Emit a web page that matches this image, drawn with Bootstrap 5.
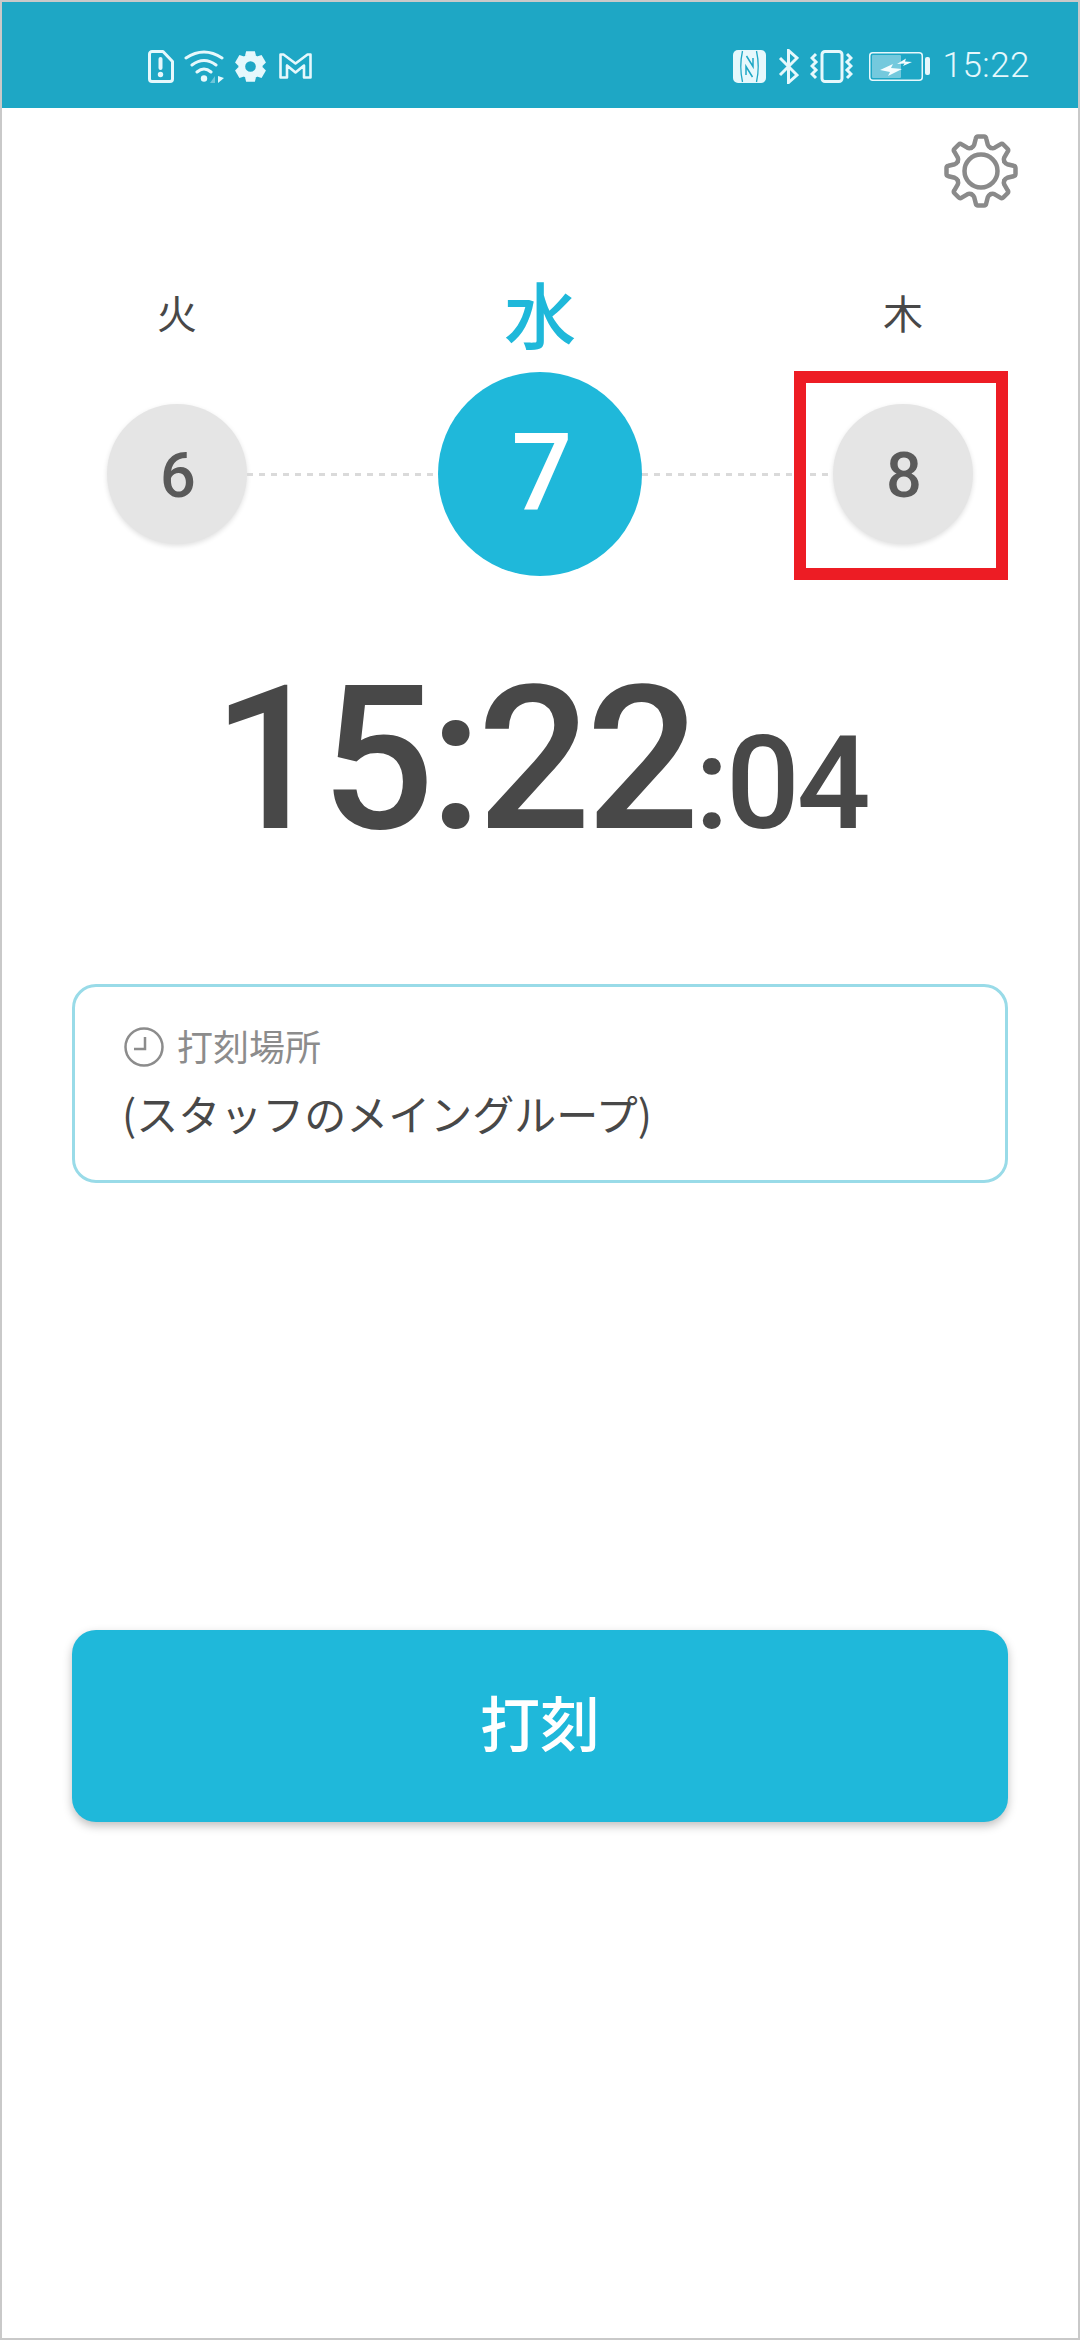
<!DOCTYPE html>
<html lang="ja">
<head>
<meta charset="utf-8">
<title>打刻</title>
<link href="https://cdn.jsdelivr.net/npm/bootstrap@5.3.0/dist/css/bootstrap.min.css" rel="stylesheet">
<style>
html,body{margin:0;height:2340px;background:#fff}
body{font-family:Roboto,"Noto Sans CJK JP",sans-serif;color:#484848}
.frame{height:2340px;border:2px solid #c9c9c9}
.statusbar{height:106px;background:#1ea7c5;color:#e6f8fc;padding:46px 48px 0 146px}
.statusbar svg{display:block;flex:none}
.iconrow{height:36px}
.g9{margin-left:9px}.g10{margin-left:10px}.g11{margin-left:11px}.g12{margin-left:12px}.g13{margin-left:13px}.g16{margin-left:16px}
.stime{font-size:35px;line-height:36px;font-weight:300;letter-spacing:.5px;color:#e6f8fc}
.gearrow{height:112px;padding:26px 60px 0 0}
.labels{height:152px;padding:0 105px}
.daycol{width:140px}
.daycol-on{width:204px}
.daylabel{font-size:40px;line-height:50px;text-align:center;margin-bottom:35px;font-family:"Noto Sans CJK JP",sans-serif;font-weight:400}
.daylabel-on{font-size:72px;line-height:80px;font-weight:500;color:#1fb8da;text-align:center;margin-bottom:20px;font-family:"Noto Sans CJK JP",sans-serif}
.circles{height:204px;padding:0 105px;position:relative}
.circle{width:140px;height:140px;border-radius:50%;background:#e5e5e5;box-shadow:0 2px 5px rgba(0,0,0,.12);color:#5a5a5a;font-size:63px;font-weight:500;flex:none;padding:5px 0 0 2px}
.circle-on{width:204px;height:204px;background:#1fb8da;color:#fff;font-size:107px;box-shadow:none;padding:0 0 0 4px}
.dash{flex:1;height:3px;background:repeating-linear-gradient(90deg,#dadada 0 6px,transparent 6px 12px)}
.redbox{position:absolute;left:792px;top:-1px;width:214px;height:209px;border:12px solid #ed1c24}
.clockrow{height:408px;padding-top:84px;line-height:200px;font-weight:500;color:#484848}
.clock-big{font-size:200px;letter-spacing:-5px}
.clock-small{font-size:130px;letter-spacing:-3px}
.placebox{margin:0 70px;height:199px;border:3px solid #99dbe8;border-radius:24px;padding:40px 49px 0}
.placehead{font-size:36px;line-height:40px;height:40px;gap:13px;color:#8c8c8c;font-family:"Noto Sans CJK JP",sans-serif;font-weight:400}
.placehead span{margin-bottom:5px}
.placeval{font-size:42px;line-height:60px;margin:16px 0 0 -2px;font-family:"Noto Sans CJK JP",sans-serif;font-weight:400;color:#484848;white-space:nowrap}
.punch.btn{display:block;margin:447px 70px 0;width:936px;height:192px;background:#1fb8da;border:0;border-radius:24px;color:#fff;font-size:60px;font-weight:500;box-shadow:0 4px 10px rgba(0,0,0,.25);font-family:"Noto Sans CJK JP",sans-serif;padding:0 0 10px}
</style>
</head>
<body>
<div class="frame">
  <div class="statusbar d-flex align-items-start">
    <div class="iconrow d-flex align-items-center">
      <svg width="26" height="33" viewBox="0 0 26 33" fill="none" stroke="#e6f8fc" stroke-width="3" stroke-linejoin="round"><path d="M4 1.500h11l9.500 10v17.500a2.500 2.500 0 0 1-2.500 2.500H4a2.500 2.500 0 0 1-2.500-2.500V4A2.500 2.500 0 0 1 4 1.500z"/><path d="M12.500 9v9" stroke-width="4" stroke-linecap="round"/><circle cx="12.500" cy="24.500" r="2.700" fill="#e6f8fc" stroke="none"/></svg>
      <svg class="g10" width="41" height="33" viewBox="0 0 41 33" fill="none" stroke="#e6f8fc" stroke-width="3" stroke-linecap="round"><path d="M2 8Q20-4 38 8M8 15Q20 6 32 15M13 22Q20 16 27 22"/><circle cx="20" cy="28.500" r="3.200" fill="#e6f8fc" stroke="none"/><path d="M31 26v7h-5z" fill="#6fc6da" stroke="none"/><path d="M34 26v7l6-5z" fill="#e6f8fc" stroke="none"/></svg>
      <svg class="g10" width="31" height="31" viewBox="-16 -16 32 32"><defs><path id="st" d="M-4.500-15.800h9l1.200 4.800-11.400 0z"/></defs><g fill="#e6f8fc"><use href="#st"/><use href="#st" transform="rotate(60)"/><use href="#st" transform="rotate(120)"/><use href="#st" transform="rotate(180)"/><use href="#st" transform="rotate(240)"/><use href="#st" transform="rotate(300)"/><path fill-rule="evenodd" d="M0-12.500a12.500 12.500 0 1 0 0 25 12.500 12.500 0 0 0 0-25zM0-5.500a5.500 5.500 0 1 1 0 11 5.500 5.500 0 0 1 0-11z"/></g></svg>
      <svg class="g13" width="33" height="26" viewBox="0 0 33 26" fill="none" stroke="#e6f8fc" stroke-width="2.600" stroke-linejoin="round"><path d="M1.500 1.500h3l12 9 12-9h3v23h-6.500V12.500l-8.500 7-8.500-7v12H1.500z"/></svg>
    </div>
    <div class="iconrow ms-auto d-flex align-items-center">
      <svg width="33" height="33" viewBox="0 0 33 33"><rect width="33" height="33" rx="5" fill="#e6f8fc"/><path d="M9.500 1C7.500 10 7.500 23 9.500 32M23.500 1C25.500 10 25.500 23 23.500 32" fill="none" stroke="#1ea7c5" stroke-width="1.300"/><path d="M13.500 6l6.500 10.500V8M19.500 27L13 16.500V25" fill="none" stroke="#1ea7c5" stroke-width="1.500"/></svg>
      <svg class="g12" width="21" height="35" viewBox="0 0 21 35" fill="none" stroke="#e6f8fc" stroke-width="3"><path d="M2 9l17 17-8.500 7.500V1.500L19 9 2 26"/></svg>
      <svg class="g11" width="43" height="33" viewBox="0 0 43 33" fill="none" stroke="#e6f8fc"><rect x="12" y="1.500" width="20" height="30" rx="3" stroke-width="3"/><path d="M6 4L2 8l4 4-4 4 4 4-4 4 4 4M37 4l4 4-4 4 4 4-4 4 4 4-4 4" stroke-width="3"/></svg>
      <svg class="g16" width="61" height="29" viewBox="0 0 61 29"><rect x=".75" y=".75" width="52.500" height="27.500" rx="3" fill="none" stroke="#e6f8fc" stroke-width="1.500"/><rect x="3" y="3" width="29" height="23" rx="1" fill="#74c9dd"/><rect x="56" y="5" width="5" height="18" rx="2" fill="#e6f8fc"/><path d="M11 18L24 12 22 16 33 17 19 24 21 20zM28 12L37 6.500 36 9.500 43 10 34 14 35.500 11.500z" fill="#f4fdff"/></svg>
      <span class="stime g12">15:22</span>
    </div>
  </div>
  <div class="gearrow d-flex justify-content-end align-items-start">
    <svg width="74" height="74" viewBox="-37 -37 74 74" fill="none" stroke="#8a8a8a" stroke-width="4.500" stroke-linejoin="round" stroke-linecap="round"><defs><path id="gt" d="M-9.600-23.200Q-7.500-24.200-6.800-26.200L-5.200-32.500Q-4.800-34.500-3-34.500H3Q4.800-34.500 5.200-32.500L6.800-26.200Q7.500-24.200 9.600-23.200"/></defs><circle r="16.500"/><use href="#gt"/><use href="#gt" transform="rotate(45)"/><use href="#gt" transform="rotate(90)"/><use href="#gt" transform="rotate(135)"/><use href="#gt" transform="rotate(180)"/><use href="#gt" transform="rotate(225)"/><use href="#gt" transform="rotate(270)"/><use href="#gt" transform="rotate(315)"/></svg>
  </div>
  <div class="labels d-flex justify-content-between align-items-end">
    <div class="daycol daylabel">火</div>
    <div class="daycol-on daylabel-on">水</div>
    <div class="daycol daylabel">木</div>
  </div>
  <div class="circles d-flex align-items-center">
    <div class="circle d-flex align-items-center justify-content-center">6</div>
    <div class="dash"></div>
    <div class="circle circle-on d-flex align-items-center justify-content-center">7</div>
    <div class="dash"></div>
    <div class="circle d-flex align-items-center justify-content-center">8</div>
    <div class="redbox"></div>
  </div>
  <div class="clockrow text-center"><span class="clock-big">15:22</span><span class="clock-small">:04</span></div>
  <div class="placebox">
    <div class="placehead d-flex align-items-center">
      <svg width="40" height="40" viewBox="0 0 40 40" fill="none" stroke="#8c8c8c" stroke-width="2.500"><circle cx="20" cy="20" r="18.500"/><path d="M21 10v12H10"/></svg>
      <span>打刻場所</span>
    </div>
    <div class="placeval">(スタッフのメイングループ)</div>
  </div>
  <button type="button" class="btn punch">打刻</button>
</div>
</body>
</html>
